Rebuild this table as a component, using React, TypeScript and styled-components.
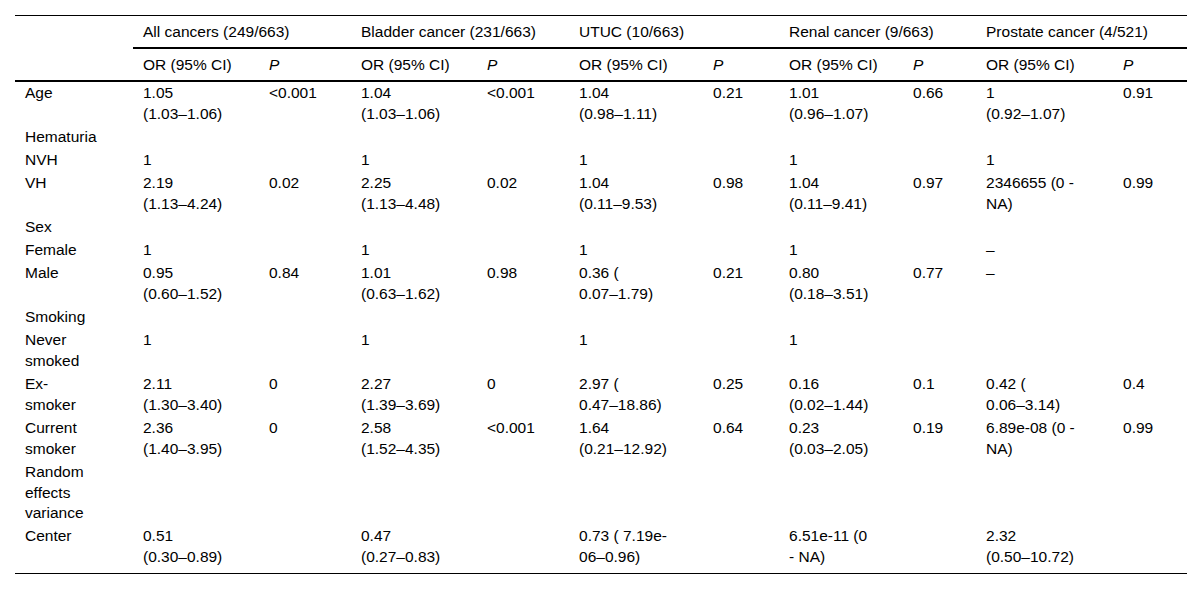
import { Fragment } from "react";
import styled, { createGlobalStyle } from "styled-components";

const GlobalStyle = createGlobalStyle`
  html, body {
    margin: 0;
    padding: 0;
    background: #fff;
  }
  body {
    font-family: "Liberation Sans", Arial, sans-serif;
    color: #000;
  }
`;

const Page = styled.div`
  padding: 15px 0 0 15px;
  width: 1172px;
`;

const Table = styled.table`
  width: 1172px;
  table-layout: fixed;
  border-collapse: separate;
  border-spacing: 0;
  border-top: 1px solid #000;
  border-bottom: 1px solid #000;
  font-size: 15.5px;
  line-height: 20.8px;
`;

const HeadCell = styled.th<{ $rule?: boolean; $italic?: boolean }>`
  text-align: left;
  font-weight: normal;
  font-style: ${(p) => (p.$italic ? "italic" : "normal")};
  padding: 5px 10px;
  line-height: 21px;
  white-space: nowrap;
  vertical-align: top;
  border-bottom: ${(p) => (p.$rule ? "2px solid #000" : "none")};
`;

const Row = styled.tr<{ $last?: boolean }>`
  & > td {
    padding-bottom: ${(p) => (p.$last ? "5px" : "1.2px")};
  }
`;

const Cell = styled.td`
  padding: 1.1px 10px;
  vertical-align: top;
  text-align: left;
  white-space: nowrap;
`;

// column widths measured from the reference
const widths = [118, 126, 92, 126, 92, 134, 76, 124, 73, 137, 74];

const groups = [
  "All cancers (249/663)",
  "Bladder cancer (231/663)",
  "UTUC (10/663)",
  "Renal cancer (9/663)",
  "Prostate cancer (4/521)",
];

type Pair = [string, string];
type DataRow = { label: string; values?: Pair[] };

const rows: DataRow[] = [
  {
    label: "Age",
    values: [
      ["1.05|(1.03–1.06)", "<0.001"],
      ["1.04|(1.03–1.06)", "<0.001"],
      ["1.04|(0.98–1.11)", "0.21"],
      ["1.01|(0.96–1.07)", "0.66"],
      ["1|(0.92–1.07)", "0.91"],
    ],
  },
  { label: "Hematuria" },
  {
    label: "NVH",
    values: [
      ["1", ""],
      ["1", ""],
      ["1", ""],
      ["1", ""],
      ["1", ""],
    ],
  },
  {
    label: "VH",
    values: [
      ["2.19|(1.13–4.24)", "0.02"],
      ["2.25|(1.13–4.48)", "0.02"],
      ["1.04|(0.11–9.53)", "0.98"],
      ["1.04|(0.11–9.41)", "0.97"],
      ["2346655 (0 -|NA)", "0.99"],
    ],
  },
  { label: "Sex" },
  {
    label: "Female",
    values: [
      ["1", ""],
      ["1", ""],
      ["1", ""],
      ["1", ""],
      ["–", ""],
    ],
  },
  {
    label: "Male",
    values: [
      ["0.95|(0.60–1.52)", "0.84"],
      ["1.01|(0.63–1.62)", "0.98"],
      ["0.36 (|0.07–1.79)", "0.21"],
      ["0.80|(0.18–3.51)", "0.77"],
      ["–", ""],
    ],
  },
  { label: "Smoking" },
  {
    label: "Never|smoked",
    values: [
      ["1", ""],
      ["1", ""],
      ["1", ""],
      ["1", ""],
      ["", ""],
    ],
  },
  {
    label: "Ex-|smoker",
    values: [
      ["2.11|(1.30–3.40)", "0"],
      ["2.27|(1.39–3.69)", "0"],
      ["2.97 (|0.47–18.86)", "0.25"],
      ["0.16|(0.02–1.44)", "0.1"],
      ["0.42 (|0.06–3.14)", "0.4"],
    ],
  },
  {
    label: "Current|smoker",
    values: [
      ["2.36|(1.40–3.95)", "0"],
      ["2.58|(1.52–4.35)", "<0.001"],
      ["1.64|(0.21–12.92)", "0.64"],
      ["0.23|(0.03–2.05)", "0.19"],
      ["6.89e-08 (0 -|NA)", "0.99"],
    ],
  },
  { label: "Random|effects|variance" },
  {
    label: "Center",
    values: [
      ["0.51|(0.30–0.89)", ""],
      ["0.47|(0.27–0.83)", ""],
      ["0.73 ( 7.19e-|06–0.96)", ""],
      ["6.51e-11 (0|- NA)", ""],
      ["2.32|(0.50–10.72)", ""],
    ],
  },
];

function Lines({ text }: { text: string }) {
  const parts = text.split("|");
  return (
    <>
      {parts.map((part, i) => (
        <Fragment key={i}>
          {i > 0 && <br />}
          {part}
        </Fragment>
      ))}
    </>
  );
}

export default function App() {
  return (
    <Page>
      <GlobalStyle />
      <Table>
        <colgroup>
          {widths.map((w, i) => (
            <col key={i} style={{ width: w }} />
          ))}
        </colgroup>
        <thead>
          <tr>
            <HeadCell rowSpan={2} $rule />
            {groups.map((g) => (
              <HeadCell key={g} colSpan={2} $rule>
                {g}
              </HeadCell>
            ))}
          </tr>
          <tr>
            {groups.map((g) => (
              <Fragment key={g}>
                <HeadCell $rule>OR (95% CI)</HeadCell>
                <HeadCell $rule $italic>
                  P
                </HeadCell>
              </Fragment>
            ))}
          </tr>
        </thead>
        <tbody>
          {rows.map((row, r) => (
            <Row key={row.label} $last={r === rows.length - 1}>
              <Cell>
                <Lines text={row.label} />
              </Cell>
              {groups.map((g, i) => {
                const pair = row.values ? row.values[i] : ["", ""];
                return (
                  <Fragment key={g}>
                    <Cell>
                      <Lines text={pair[0]} />
                    </Cell>
                    <Cell>{pair[1]}</Cell>
                  </Fragment>
                );
              })}
            </Row>
          ))}
        </tbody>
      </Table>
    </Page>
  );
}
